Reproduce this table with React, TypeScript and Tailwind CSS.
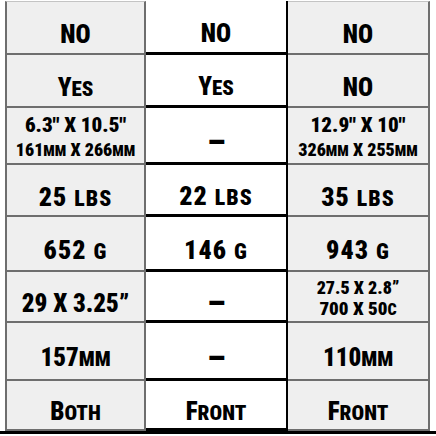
import React from "react";

const FONT: React.CSSProperties = {
  fontFamily: 'Roboto, "Open Sans", sans-serif',
  fontStretch: "75%",
  fontWeight: 900,
};

function Sc({ t }: { t: string }) {
  const parts: React.ReactNode[] = [];
  let buf = "";
  let lower = false;
  let k = 0;
  const flush = () => {
    if (!buf) return;
    parts.push(
      lower ? (
        <span key={k++} className="text-[0.84em]">
          {buf.toUpperCase()}
        </span>
      ) : (
        <span key={k++}>{buf}</span>
      )
    );
    buf = "";
  };
  for (const ch of t) {
    const isLow = ch >= "a" && ch <= "z";
    if (isLow !== lower && buf) flush();
    lower = isLow;
    buf += ch;
  }
  flush();
  return <>{parts}</>;
}

type Cell = { l: string[]; s: number[]; tr?: number; dash?: boolean; gap?: number };
const one = (t: string, s = 25, tr = 0): Cell => ({ l: [t], s: [s], tr });
const two = (a: string, b: string, sa: number, sb: number, gap: number): Cell => ({ l: [a, b], s: [sa, sb], gap });
const DASH: Cell = { l: ["–"], s: [34], dash: true };

const rows: { h: number; c: Cell[] }[] = [
  { h: 54, c: [one("NO"), one("NO"), one("NO")] },
  { h: 53, c: [one("Yes"), one("Yes"), one("NO")] },
  {
    h: 57,
    c: [two('6.3" X 10.5"', "161mm X 266mm", 21, 18, 5), DASH, two('12.9" X 10"', "326mm X 255mm", 21, 18, 5)],
  },
  { h: 52, c: [one("25 lbs", 26, 1), one("22 lbs", 26, 1), one("35 lbs", 26, 1)] },
  { h: 55, c: [one("652 g", 26, 1), one("146 g", 26, 1), one("943 g", 26, 1)] },
  { h: 51, c: [one("29 X 3.25”", 25), DASH, two("27.5 X 2.8”", "700 X 50c", 18, 19, 2)] },
  { h: 58, c: [one("157mm", 25), DASH, one("110mm", 25)] },
  { h: 50, c: [one("Both"), one("Front"), one("Front")] },
];

function Content({ cell }: { cell: Cell }) {
  if (cell.dash) {
    return (
      <div className="leading-none text-black pt-[12px]" style={{ fontSize: cell.s[0] }}>
        –
      </div>
    );
  }
  if (cell.l.length === 1) {
    return (
      <div
        className="leading-none text-black pt-[13px]"
        style={{ fontSize: cell.s[0], letterSpacing: cell.tr ? `${cell.tr}px` : undefined }}
      >
        <Sc t={cell.l[0]} />
      </div>
    );
  }
  return (
    <div className="flex flex-col items-center leading-none text-black pt-[3px]">
      <div style={{ fontSize: cell.s[0] }}>
        <Sc t={cell.l[0]} />
      </div>
      <div style={{ fontSize: cell.s[1], marginTop: cell.gap }}>
        <Sc t={cell.l[1]} />
      </div>
    </div>
  );
}

export default function App() {
  return (
    <div className="w-[436px] h-[436px] overflow-hidden bg-white" style={FONT}>
      <div className="pt-[1px] pl-[5px]">
        <div className="w-[425px]">
          {rows.map((r, i) => (
            <div key={i} className="grid grid-cols-[141px_142px_142px]" style={{ height: r.h }}>
              <div
                className={`flex items-center justify-center bg-[#efefef] border-l-2 border-r-2 border-b-2 border-[#6e6e6e] ${
                  i === 0 ? "border-t border-t-[#c4c4c4]" : ""
                }`}
              >
                <Content cell={r.c[0]} />
              </div>
              <div className="flex items-center justify-center bg-white border-b-[3px] border-r-2 border-black">
                <Content cell={r.c[1]} />
              </div>
              <div
                className={`flex items-center justify-center bg-[#efefef] border-r-2 border-b-2 border-[#6e6e6e] ${
                  i === 0 ? "border-t border-t-[#c4c4c4]" : ""
                }`}
              >
                <Content cell={r.c[2]} />
              </div>
            </div>
          ))}
        </div>
      </div>
      <div className="h-[3px] w-[436px] bg-black" />
    </div>
  );
}
